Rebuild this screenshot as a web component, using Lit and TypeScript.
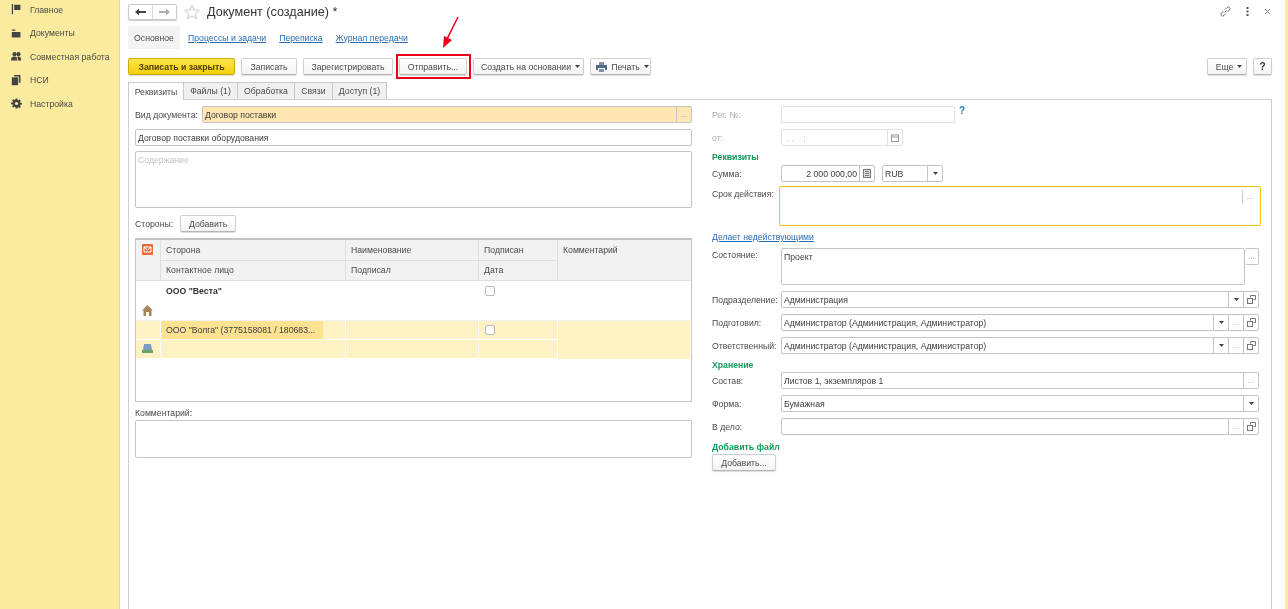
import { LitElement, html, css, svg } from 'lit';
import { customElement } from 'lit/decorators.js';

const dropdown = html`<svg class="caret" width="5" height="3" viewBox="0 0 5 3"><path d="M0 0h5L2.5 3z" fill="#444"/></svg>`;
const copyIcon = html`<svg width="9" height="9" viewBox="0 0 9 9" fill="none" stroke="#777"><path d="M3.500 2.500v-2h5v4h-2"/><rect x=".5" y="3.500" width="5" height="5" fill="#fff"/></svg>`;
const calendar = html`<svg width="8" height="8" viewBox="0 0 8 8" fill="none" stroke="#999"><rect x=".5" y="1" width="7" height="6.500"/><path d="M.5 3h7"/></svg>`;
const calc = html`<svg width="8" height="9" viewBox="0 0 8 9"><rect x=".5" y=".5" width="7" height="8" fill="#ddd" stroke="#777"/><path d="M2 2.500h4M2 4.500h4M2 6.500h4" stroke="#777"/></svg>`;

const navIcons = [
  svg`<path d="M1 0h1.600v13H1zM4 1h8v6.500H4z" fill="#444"/>`,
  svg`<path d="M1 2h4l1 1.500H1zM1 5h11v7H1z" fill="#444"/>`,
  svg`<circle cx="4.500" cy="4" r="2.600" fill="#444"/><circle cx="9.500" cy="4" r="2.600" fill="#444"/><path d="M0 12c0-4 2-5 4.500-5S8 8 8 12zM9 12c0-2-.3-3.500-1-4.800.7-.2 1.200-.2 1.800-.2 2 0 3.200 1.500 3.200 5z" fill="#444"/>`,
  svg`<path d="M4 0h8v10H10V2H4z" fill="#444"/><path d="M1 3h8v10H1z" fill="#444"/>`,
  svg`<path d="M6 .5h2l.3 1.800 1.300.6 1.500-1 1.400 1.400-1 1.500.6 1.300 1.800.3v2l-1.800.3-.6 1.300 1 1.500-1.400 1.400-1.500-1-1.300.6L8 13.500H6l-.3-1.800-1.300-.6-1.500 1-1.400-1.400 1-1.500-.6-1.300L0 8V6l1.800-.3.6-1.300-1-1.500L2.800 1.500l1.500 1 1.300-.6z" fill="#444"/><circle cx="7" cy="7" r="2" fill="#fbeb9e"/>`,
];

@customElement('app-root')
export class AppRoot extends LitElement {
  static styles = css`
    :host {
      display: flex;
      position: relative;
      width: 1288px;
      height: 609px;
      overflow: hidden;
      background: #fff;
      font-family: "Liberation Sans", Arial, sans-serif;
      font-size: 8.7px;
      color: #4a4a4a;
      filter: blur(0.3px);
    }

    .sidebar {
      width: 119px;
      flex: none;
      margin-top: -2px;
      background: #fbeb9e;
      border-right: 1px solid #e4d89a;
    }
    .nav-item {
      height: 23.5px;
      display: flex;
      align-items: center;
      gap: 8px;
      padding-left: 11px;
      white-space: nowrap;
    }
    .nav-item svg { flex: none; width: 11px; height: 11px; }

    .main {
      flex: 1;
      min-width: 0;
      display: flex;
      flex-direction: column;
      padding: 3px 13px 0 8px;
    }
    .strip { width: 3px; flex: none; background: #fbeb9e; }

    .titlebar { display: flex; align-items: center; height: 17px; }
    .history {
      display: flex;
      width: 49px;
      height: 16px;
      box-sizing: border-box;
      border: 1px solid #c8c8c8;
      border-radius: 2px;
      box-shadow: 0 1px 1px #ccc;
    }
    .history span { flex: 1; display: flex; align-items: center; justify-content: center; }
    .history span + span { border-left: 1px solid #d8d8d8; }
    .star { margin-left: 7px; }
    .title { margin-left: 7px; font-size: 12.6px; color: #333; }
    .window-actions { margin-left: auto; display: flex; align-items: center; gap: 15px; padding-right: 1px; }

    .subnav { display: flex; align-items: center; height: 23px; margin-top: 6px; }
    .subnav .current {
      width: 52px;
      height: 23px;
      display: flex;
      align-items: center;
      justify-content: center;
      background: #f3f3f3;
      margin-right: 8px;
    }
    .subnav a { margin-right: 13px; }
    a { color: #2a6cb5; text-decoration: underline; }

    .commands { display: flex; align-items: center; gap: 6px; margin-top: 9px; height: 17px; }
    .btn {
      height: 17px;
      box-sizing: border-box;
      display: inline-flex;
      align-items: center;
      justify-content: center;
      gap: 4px;
      background: linear-gradient(#fff, #f3f3f3);
      border: 1px solid #cfcfcf;
      border-bottom-color: #b5b5b5;
      border-radius: 2px;
      box-shadow: 0 1px 1px #ddd;
      white-space: nowrap;
    }
    .btn.primary {
      background: linear-gradient(#fbe54a, #f6cf0a);
      border-color: #c9a90c;
      font-weight: bold;
      color: #4a3f00;
    }
    .btn.menu { padding-left: 4px; }
    .marked { position: relative; }
    .marked::after {
      content: "";
      position: absolute;
      inset: -5px -5px -5px -4px;
      border: 2px solid #e8001c;
    }
    .spacer { flex: 1; }

    .tabs { display: flex; margin-top: 7px; height: 17px; }
    .tab {
      box-sizing: border-box;
      height: 17px;
      display: flex;
      align-items: center;
      justify-content: center;
      background: #f0f0f0;
      border: 1px solid #c9c9c9;
      border-left: 0;
      border-bottom: 0;
    }
    .tab.active { background: #fff; height: 18px; border-left: 1px solid #c9c9c9; position: relative; z-index: 1; }

    .panel {
      flex: 1;
      display: flex;
      gap: 20px;
      border: 1px solid #cfcfcf;
      border-bottom: 0;
      padding: 6px 10px 0 6px;
    }
    .left { width: 557px; flex: none; display: flex; flex-direction: column; }
    .right { flex: 1; min-width: 0; display: flex; flex-direction: column; }

    .field {
      box-sizing: border-box;
      border: 1px solid #c4c4c4;
      border-radius: 2px;
      background: #fff;
      height: 17px;
      display: flex;
      align-items: center;
      color: #3c3c3c;
      min-width: 0;
    }
    .field .value { flex: 1; padding: 0 2px; white-space: nowrap; overflow: hidden; }
    .field .value.num { text-align: right; padding-right: 2px; }
    .field .part {
      flex: none;
      width: 14px;
      height: 100%;
      border-left: 1px solid #c4c4c4;
      display: flex;
      align-items: center;
      justify-content: center;
      color: #999;
      font-size: 8px;
    }
    .field.mark { background: #fde6b1; }
    .field.area { align-items: flex-start; padding: 3px 0; }
    .field.disabled { border-color: #e2e2e2; color: #bbb; }
    .field.disabled .part { border-color: #e2e2e2; }
    .placeholder { color: #c2c2c2; }

    .row { display: flex; align-items: center; }
    .row.top { align-items: flex-start; }
    .row.top .label { padding-top: 2px; }
    .row .label { flex: none; white-space: nowrap; }
    .row .grow { flex: 1; min-width: 0; margin-right: 2px; }
    .left .row .grow { margin-right: 0; }
    .muted { color: #a9a9a9; }

    .parties { display: flex; align-items: center; gap: 7px; margin-top: 7px; }

    .table {
      margin-top: 6px;
      height: 164px;
      box-sizing: border-box;
      border: 1px solid #c4c4c4;
      border-top-width: 2px;
      display: grid;
      grid-template-columns: 25px 185px 133px 79px 1fr;
      grid-auto-rows: min-content;
    }
    .cell {
      display: flex;
      align-items: center;
      padding-left: 5px;
      box-sizing: border-box;
      white-space: nowrap;
      overflow: hidden;
      height: 20.5px;
    }
    .head { background: #f2f2f2; border-right: 1px solid #dedede; border-bottom: 1px solid #dedede; }
    .tall { grid-row: span 2; height: 41px; }
    .tall.note { align-items: flex-start; padding-top: 5px; border-right: 0; }
    .tall.mail { padding: 4px 0 0 6px; align-items: flex-start; }
    .data { height: 19.5px; }
    .white { background: #fff; }
    .sel { background: #fef2c5; border-right: 1px solid #fff; border-bottom: 1px solid #fff; padding-left: 5px; }
    .sel.first { border-top: 1px solid #f1f1f1; }
    .current-cell {
      box-sizing: border-box;
      background: #fde291;
      height: 100%;
      display: flex;
      align-items: center;
      padding-left: 5px;
      width: 162px;
      margin-left: -5px;
      color: #3c3c3c;
      white-space: nowrap;
      overflow: hidden;
    }
    .check {
      width: 10px;
      height: 10px;
      box-sizing: border-box;
      border: 1px solid #b9b9b9;
      border-radius: 2px;
      background: #fff;
      margin-left: 1px;
    }
    .icon-cell { padding-left: 6px; }
    .bold { font-weight: bold; color: #333; }

    .group { color: #0f9a58; font-weight: bold; }
    .help { color: #2a7fc1; font-weight: bold; font-size: 10px; margin: -8px 0 0 4px; }
    .arrow { position: absolute; left: 440px; top: 14px; }
  `;

  private field(text: string, parts: unknown[] = [], cls = '') {
    return html`<div class="field ${cls}">
      <span class="value">${text}</span>
      ${parts.map((p) => html`<span class="part">${p}</span>`)}
    </div>`;
  }

  private labeled(label: string, content: unknown, top: number, cls = '') {
    return html`<div class="row ${cls}" style="margin-top:${top}px">
      <span class="label" style="width:69px">${label}</span>
      <div class="grow">${content}</div>
    </div>`;
  }

  render() {
    const nav = ['Главное', 'Документы', 'Совместная работа', 'НСИ', 'Настройка'];
    return html`
      <aside class="sidebar">
        ${nav.map(
          (n, i) => html`<div class="nav-item">
            <svg viewBox="0 0 14 14">${navIcons[i]}</svg><span>${n}</span>
          </div>`
        )}
      </aside>
      <div class="main">
        <div class="titlebar">
          <div class="history">
            <span><svg width="11" height="8" viewBox="0 0 11 8"><path d="M0 4l4-3.500V3h7v2H4v2.500z" fill="#444"/></svg></span>
            <span><svg width="11" height="8" viewBox="0 0 11 8"><path d="M11 4L7 .5V3H0v2h7v2.500z" fill="#aaa"/></svg></span>
          </div>
          <svg class="star" width="16" height="16" viewBox="0 0 16 16"><path d="M8 1l2.100 4.800 5.200.5-3.900 3.400 1.200 5.100L8 12.100l-4.600 2.700 1.200-5.100L.7 6.300l5.200-.5z" fill="#fff" stroke="#c9c9c9"/></svg>
          <span class="title">Документ (создание) *</span>
          <div class="window-actions">
            <svg width="11" height="11" viewBox="0 0 11 11" fill="none" stroke="#777"><path d="M4.500 6.500l2-2M3.500 5L1.500 7a1.700 1.700 0 0 0 2.500 2.500L6 7.500M5 3.500L7 1.500A1.700 1.700 0 0 1 9.500 4L7.500 6"/></svg>
            <svg width="3" height="9" viewBox="0 0 3 9"><path d="M.5 0h2v2h-2zM.5 3.500h2v2h-2zM.5 7h2v2h-2z" fill="#555"/></svg>
            <svg width="7" height="7" viewBox="0 0 7 7" stroke="#888"><path d="M1 1l5 5M6 1L1 6"/></svg>
          </div>
        </div>
        <nav class="subnav">
          <span class="current">Основное</span>
          <a>Процессы и задачи</a><a>Переписка</a><a>Журнал передачи</a>
        </nav>
        <div class="commands">
          <span class="btn primary" style="width:107px">Записать и закрыть</span>
          <span class="btn" style="width:56px">Записать</span>
          <span class="btn" style="width:90px">Зарегистрировать</span>
          <span class="btn marked" style="width:68px">Отправить...</span>
          <span class="btn menu" style="width:111px">Создать на основании ${dropdown}</span>
          <span class="btn menu" style="width:61px">
            <svg width="11" height="10" viewBox="0 0 11 10"><path d="M3 0h5v3H3z" fill="#7f93a8"/><path d="M0 3h11v5H9V6H2v2H0z" fill="#4f6b86"/><path d="M3 7h5v3H3z" fill="#7f93a8"/></svg>
            Печать ${dropdown}
          </span>
          <span class="spacer"></span>
          <span class="btn menu" style="width:40px">Еще ${dropdown}</span>
          <span class="btn bold" style="width:19px;font-size:10px">?</span>
        </div>
        <div class="tabs">
          <span class="tab active" style="width:56px">Реквизиты</span>
          <span class="tab" style="width:54px">Файлы (1)</span>
          <span class="tab" style="width:57px">Обработка</span>
          <span class="tab" style="width:38px">Связи</span>
          <span class="tab" style="width:54px">Доступ (1)</span>
        </div>
        <section class="panel">
          <div class="left">
            <div class="row">
              <span class="label" style="width:67px">Вид документа:</span>
              <div class="grow">${this.field('Договор поставки', ['...'], 'mark')}</div>
            </div>
            <div style="margin-top:6px">${this.field('Договор поставки оборудования')}</div>
            <div class="field area" style="height:57px;margin-top:5px">
              <span class="value placeholder">Содержание</span>
            </div>
            <div class="parties">
              <span>Стороны:</span>
              <span class="btn" style="width:56px">Добавить</span>
            </div>
            <div class="table">
              <div class="cell head tall mail">
                <svg width="11" height="11" viewBox="0 0 11 11"><rect width="11" height="11" rx="1" fill="#ee6a3a"/><path d="M2 3h7v5H2zM2 3l3.500 3L9 3" fill="none" stroke="#fff"/></svg>
              </div>
              <div class="cell head">Сторона</div>
              <div class="cell head">Наименование</div>
              <div class="cell head">Подписан</div>
              <div class="cell head tall note">Комментарий</div>
              <div class="cell head">Контактное лицо</div>
              <div class="cell head">Подписал</div>
              <div class="cell head">Дата</div>

              <div class="cell data white"></div>
              <div class="cell data white bold">ООО "Веста"</div>
              <div class="cell data white"></div>
              <div class="cell data white"><span class="check"></span></div>
              <div class="cell data white"></div>
              <div class="cell data white icon-cell">
                <svg width="11" height="11" viewBox="0 0 11 11"><path d="M5.500 0L11 5.500H9.500V11h-8V5.500H0z" fill="#a8845c"/><path d="M4 7h3v4H4z" fill="#fff"/></svg>
              </div>
              <div class="cell data white"></div>
              <div class="cell data white"></div>
              <div class="cell data white"></div>
              <div class="cell data white"></div>

              <div class="cell data sel first"></div>
              <div class="cell data sel first"><span class="current-cell">ООО "Волга" (3775158081 / 180683...</span></div>
              <div class="cell data sel first"></div>
              <div class="cell data sel first"><span class="check"></span></div>
              <div class="cell data sel first" style="border-bottom:0"></div>
              <div class="cell data sel icon-cell">
                <svg width="11" height="9" viewBox="0 0 11 9"><path d="M2 0h7l1 6H1z" fill="#7c9cc4"/><path d="M0 6h11v3H0z" fill="#6aa36a"/></svg>
              </div>
              <div class="cell data sel"></div>
              <div class="cell data sel"></div>
              <div class="cell data sel"></div>
              <div class="cell data sel" style="border-bottom:0"></div>
            </div>
            <div style="margin-top:6px">Комментарий:</div>
            <div class="field" style="height:38px;margin-top:2px"></div>
          </div>

          <div class="right">
            <div class="row muted">
              <span class="label" style="width:69px">Рег. №:</span>
              <div class="field disabled" style="width:174px"></div>
              <span class="help">?</span>
            </div>
            <div class="row muted" style="margin-top:6px">
              <span class="label" style="width:69px">от:</span>
              <div class="field disabled" style="width:122px">
                <span class="value">&nbsp;. . &nbsp;&nbsp; :</span><span class="part">${calendar}</span>
              </div>
            </div>
            <div class="group" style="margin-top:6px">Реквизиты</div>
            <div class="row" style="margin-top:3px">
              <span class="label" style="width:69px">Сумма:</span>
              <div class="field" style="width:94px">
                <span class="value num">2 000 000,00</span><span class="part">${calc}</span>
              </div>
              <div class="field" style="width:61px;margin-left:7px">
                <span class="value">RUB</span><span class="part">${dropdown}</span>
              </div>
            </div>
            <div class="row top" style="margin-top:4px">
              <span class="label" style="width:67px;padding-top:3px">Срок действия:</span>
              <div class="field area" style="width:482px;height:40px;border-color:#f3c511;padding:3px 3px 0 0;justify-content:flex-end">
                <span class="part" style="height:13px;border-left-color:#ccc">...</span>
              </div>
            </div>
            <a style="margin-top:5px;height:12px;line-height:12px">Делает недействующими</a>
            ${this.labeled(
              'Состояние:',
              html`<div style="display:flex;align-items:flex-start">
                <div class="field area" style="flex:1;height:37px"><span class="value">Проект</span></div>
                <div class="field" style="width:14px;height:17px;border-left:0;justify-content:center;color:#999;font-size:8px">...</div>
              </div>`,
              5,
              'top'
            )}
            ${this.labeled('Подразделение:', this.field('Администрация', [dropdown, copyIcon]), 6)}
            ${this.labeled('Подготовил:', this.field('Администратор (Администрация, Администратор)', [dropdown, '...', copyIcon]), 6)}
            ${this.labeled('Ответственный:', this.field('Администратор (Администрация, Администратор)', [dropdown, '...', copyIcon]), 6)}
            <div class="group" style="margin-top:6px">Хранение</div>
            ${this.labeled('Состав:', this.field('Листов 1, экземпляров 1', ['...']), 2)}
            ${this.labeled('Форма:', this.field('Бумажная', [dropdown]), 6)}
            ${this.labeled('В дело:', this.field('', ['...', copyIcon]), 6)}
            <div class="group" style="margin-top:7px">Добавить файл</div>
            <div style="margin-top:2px"><span class="btn" style="width:64px">Добавить...</span></div>
          </div>
        </section>
      </div>
      <div class="strip"></div>
      <svg class="arrow" width="20" height="36" viewBox="0 0 20 36">
        <path d="M18 3L7.500 24" stroke="#e8001c" stroke-width="1.500" fill="none"/>
        <path d="M3 34l1-12 8 4z" fill="#e8001c"/>
      </svg>
    `;
  }
}
